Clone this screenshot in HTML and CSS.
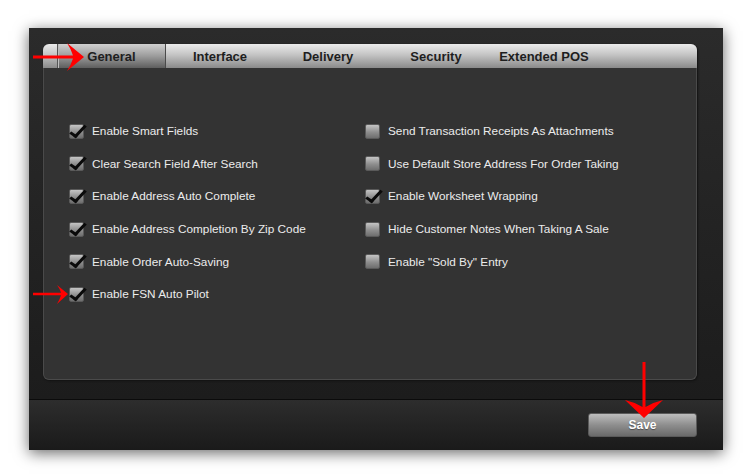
FILE: index.html
```html
<!DOCTYPE html>
<html lang="en">
<head>
    <meta charset="UTF-8">
    <title>Settings</title>
    <link rel="stylesheet" href="styles.css">
</head>
<body>
    <div class="window">
        <div class="main">
            <div class="panel">
                <div class="tabs">
                    <span class="tab-cap"></span>
                    <span class="tab active">General</span>
                    <span class="tab">Interface</span>
                    <span class="tab">Delivery</span>
                    <span class="tab">Security</span>
                    <span class="tab">Extended POS</span>
                </div>
                <div class="options">
                    <div class="col">
                        <label class="opt"><span class="box checked"></span>Enable Smart Fields</label>
                        <label class="opt"><span class="box checked"></span>Clear Search Field After Search</label>
                        <label class="opt"><span class="box checked"></span>Enable Address Auto Complete</label>
                        <label class="opt"><span class="box checked"></span>Enable Address Completion By Zip Code</label>
                        <label class="opt"><span class="box checked"></span>Enable Order Auto-Saving</label>
                        <label class="opt"><span class="box checked"></span>Enable FSN Auto Pilot</label>
                    </div>
                    <div class="col">
                        <label class="opt"><span class="box"></span>Send Transaction Receipts As Attachments</label>
                        <label class="opt"><span class="box"></span>Use Default Store Address For Order Taking</label>
                        <label class="opt"><span class="box checked"></span>Enable Worksheet Wrapping</label>
                        <label class="opt"><span class="box"></span>Hide Customer Notes When Taking A Sale</label>
                        <label class="opt"><span class="box"></span>Enable "Sold By" Entry</label>
                    </div>
                </div>
            </div>
        </div>
        <div class="footer">
            <button class="save">Save</button>
        </div>
    </div>

    <!-- red callout arrows drawn over the screenshot -->
    <svg class="arrows" width="743" height="474" viewBox="0 0 743 474">
        <path d="M33 55.5 H73 Q71 49 67 43 L84 57 L67 71 Q71 65 73 58.5 H33 Z" fill="#f00"/>
        <path d="M33 292.8 H61 Q60 289 57 285 L68 294 L57 304 Q60 299 61 295.2 H33 Z" fill="#f00"/>
        <path d="M642.5 362 V407 Q634 402 625 400 L644 418 L663 400 Q654 402 645.5 407 V362 Z" fill="#f00"/>
    </svg>
</body>
</html>
```

FILE: styles.css
```css
* {
    margin: 0;
    padding: 0;
    box-sizing: border-box;
}

body {
    background: #fff;
    font-family: "Liberation Sans", Arial, sans-serif;
    position: relative;
    width: 743px;
    height: 474px;
    overflow: hidden;
}

.window {
    width: 694px;
    height: 422px;
    margin: 28px 0 0 29px;
    display: flex;
    flex-direction: column;
    box-shadow: 0 3px 14px rgba(0, 0, 0, 0.6);
}

.main {
    height: 371px;
    padding: 16px 26px 19px 14px;
    background: linear-gradient(#2b2b2b, #1c1c1c);
}

.panel {
    height: 100%;
    background: #333;
    border: 1px solid #4a4a4a;
    border-top: none;
    border-radius: 6px;
    box-shadow: 1px 1px 2px #121212;
    display: flex;
    flex-direction: column;
}

.tabs {
    height: 24px;
    display: flex;
    background: linear-gradient(#ebebeb, #c4c4c4 45%, #8a8a8a);
    border-radius: 6px 6px 0 0;
    margin: 0 -1px;
}

.tab-cap {
    width: 15px;
    border-right: 1px solid #555;
}

.tab {
    width: 108px;
    display: flex;
    justify-content: center;
    align-items: center;
    font-size: 13px;
    font-weight: bold;
    color: #1e1e1e;
}

.tab.active {
    background: linear-gradient(#d0d0d0, #9c9c9c 50%, #5e5e5e);
    border-right: 1px solid #4a4a4a;
    box-shadow: inset 1px 0 0 #bdbdbd;
}

.options {
    display: flex;
    padding: 47px 0 0 25px;
}

.col {
    width: 296px;
    display: flex;
    flex-direction: column;
}

.opt {
    height: 32.6px;
    display: flex;
    align-items: center;
    font-size: 11.8px;
    color: #ececec;
}

.box {
    width: 15px;
    height: 15px;
    margin-right: 8px;
    border: 1px solid #5a5a5a;
    border-radius: 2px;
    background: linear-gradient(#c4c4c4, #8e8e8e 55%, #6e6e6e);
    position: relative;
}

.box.checked::after {
    content: "";
    position: absolute;
    left: 4px;
    top: -3px;
    width: 5px;
    height: 13px;
    border: solid #0a0a0a;
    border-width: 0 3px 3px 0;
    transform: rotate(35deg) skewX(-8deg);
}

.footer {
    flex: 1;
    border-top: 1px solid #0b0b0b;
    background: linear-gradient(#2d2d2d, #1a1a1a);
    display: flex;
    justify-content: flex-end;
    align-items: center;
    padding-right: 26px;
}

.save {
    width: 109px;
    height: 24px;
    border: 1px solid #5a5a5a;
    border-radius: 3px;
    background: linear-gradient(#bdbdbd, #8e8e8e 50%, #6a6a6a);
    color: #fff;
    font-family: "Liberation Sans", Arial, sans-serif;
    font-size: 12px;
    font-weight: bold;
    text-shadow: 0 1px 1px rgba(0, 0, 0, 0.4);
}

.arrows {
    position: absolute;
    left: 0;
    top: 0;
    pointer-events: none;
}
```
